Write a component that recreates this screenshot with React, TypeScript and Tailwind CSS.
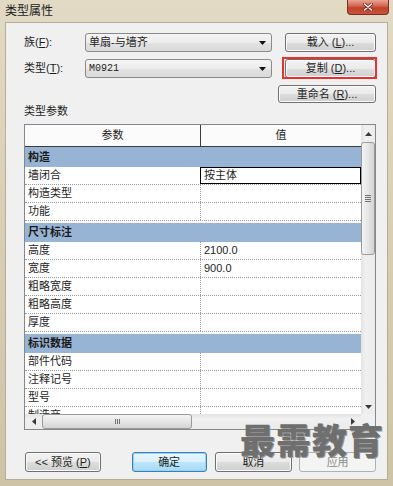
import type { ReactNode } from "react";

type Row =
  | { kind: "group"; label: string }
  | { kind: "param"; label: string; value?: string; selected?: boolean };

const rows: Row[] = [
  { kind: "group", label: "构造" },
  { kind: "param", label: "墙闭合", value: "按主体", selected: true },
  { kind: "param", label: "构造类型" },
  { kind: "param", label: "功能" },
  { kind: "group", label: "尺寸标注" },
  { kind: "param", label: "高度", value: "2100.0" },
  { kind: "param", label: "宽度", value: "900.0" },
  { kind: "param", label: "粗略宽度" },
  { kind: "param", label: "粗略高度" },
  { kind: "param", label: "厚度" },
  { kind: "group", label: "标识数据" },
  { kind: "param", label: "部件代码" },
  { kind: "param", label: "注释记号" },
  { kind: "param", label: "型号" },
  { kind: "param", label: "制造商" },
];

// underlined mnemonic letter, like (&F) in a Windows dialog
function Mn({ children }: { children: ReactNode }) {
  return <span className="underline underline-offset-1">{children}</span>;
}

function WinButton({
  children,
  className = "",
}: {
  children: ReactNode;
  className?: string;
}) {
  return (
    <div
      className={`flex items-center justify-center rounded-[3px] border border-[#707070] bg-[linear-gradient(#f2f2f2_0%,#ebebeb_50%,#dddddd_51%,#cfcfcf_100%)] shadow-[inset_0_0_0_1px_#fbfbfb] ${className}`}
    >
      {children}
    </div>
  );
}

function Combo({ children }: { children: ReactNode }) {
  return (
    <div className="flex h-[19px] w-[187px] items-center rounded-[3px] border border-[#8a8a8a] bg-[linear-gradient(#f4f4f4_0%,#ececec_50%,#e2e2e2_51%,#dadada_100%)] pl-[3px] pr-[5px]">
      {children}
      <svg className="ml-auto" width="7" height="4" viewBox="0 0 7 4">
        <path d="M0 0h7L3.5 4z" fill="#111" />
      </svg>
    </div>
  );
}

function Arrow({ dir }: { dir: "up" | "down" | "left" | "right" }) {
  const d = {
    up: "M0 4h7L3.5 0z",
    down: "M0 0h7L3.5 4z",
    left: "M4 0v7L0 3.5z",
    right: "M0 0v7L4 3.5z",
  }[dir];
  const vertical = dir === "up" || dir === "down";
  return (
    <svg width={vertical ? 7 : 4} height={vertical ? 4 : 7} viewBox={vertical ? "0 0 7 4" : "0 0 4 7"}>
      <path d={d} fill="#3a3a3a" />
    </svg>
  );
}

function VScroll() {
  return (
    <div className="flex w-[14px] flex-col bg-[linear-gradient(90deg,#e3e3e3,#f0f0f0_30%,#ececec)]">
      <div className="flex h-[17px] items-center justify-center">
        <Arrow dir="up" />
      </div>
      <div className="flex h-[113px] flex-col items-center justify-center gap-[1px] rounded-[3px] border border-[#9a9a9a] bg-[linear-gradient(90deg,#f4f4f4,#e6e6e6_50%,#d4d4d4)]">
        <div className="h-px w-[6px] bg-[#707070]" />
        <div className="h-px w-[6px] bg-[#707070]" />
        <div className="h-px w-[6px] bg-[#707070]" />
        <div className="h-px w-[6px] bg-[#707070]" />
      </div>
      <div className="flex-1" />
      <div className="flex h-[15px] items-center justify-center">
        <Arrow dir="down" />
      </div>
    </div>
  );
}

function HScroll() {
  return (
    <div className="flex h-[15px] flex-1 items-stretch bg-[linear-gradient(#e3e3e3,#f0f0f0_30%,#ececec)]">
      <div className="flex w-[17px] items-center justify-center">
        <Arrow dir="left" />
      </div>
      <div className="flex w-[150px] items-center justify-center gap-[1px] rounded-[3px] border border-[#9a9a9a] bg-[linear-gradient(#f4f4f4,#e6e6e6_50%,#d4d4d4)]">
        <div className="h-[5px] w-px bg-[#707070]" />
        <div className="h-[5px] w-px bg-[#707070]" />
        <div className="h-[5px] w-px bg-[#707070]" />
      </div>
      <div className="flex-1" />
      <div className="flex w-[17px] items-center justify-center">
        <Arrow dir="right" />
      </div>
    </div>
  );
}

function ParamTable() {
  return (
    <div className="flex h-[306px] w-[352px] flex-col border border-[#828790] bg-white">
      <div className="flex flex-1 overflow-hidden">
        <div className="flex w-[336px] flex-col">
          <div className="flex h-[22px] border-b border-[#3c3c3c] bg-[#fbfbfb]">
            <div className="flex w-[176px] items-center justify-center border-r border-[#3c3c3c]">参数</div>
            <div className="flex flex-1 items-center justify-center">值</div>
          </div>
          <div className="flex-1 overflow-hidden">
            {rows.map((r, i) =>
              r.kind === "group" ? (
                <div
                  key={r.label}
                  className={`flex items-center bg-[#98b4d4] pl-[3px] font-bold text-[#1a1a1a] ${
                    i === 0 ? "h-[20px]" : "h-[21px] border-t-2 border-white"
                  }`}
                >
                  {r.label}
                </div>
              ) : (
                <div key={r.label} className="flex h-[18px] border-b border-dotted border-[#9a9a9a]">
                  <div className="flex w-[175px] items-center pl-[3px]">{r.label}</div>
                  <div
                    className={`flex flex-1 items-center pl-[3px] ${
                      r.selected ? "border border-black" : "border-l border-dotted border-[#9a9a9a]"
                    }`}
                  >
                    {r.value}
                  </div>
                </div>
              )
            )}
          </div>
        </div>
        <VScroll />
      </div>
      <div className="flex">
        <HScroll />
        <div className="h-[15px] w-[14px] bg-[#f0f0f0]" />
      </div>
    </div>
  );
}

export default function App() {
  return (
    <div className="relative flex h-[486px] w-[393px] flex-col overflow-hidden bg-[linear-gradient(180deg,#e2dac4,#d6cbb1_60%,#cfc3a7)] px-[5px] pb-[6px] font-['Liberation_Sans','Noto_Sans_CJK_SC',sans-serif] text-[11px] text-[#1e1e1e]">
      {/* title bar */}
      <div className="flex h-[22px] items-start">
        <div className="pt-[4px] text-[12px] leading-[14px] text-[#222]">类型属性</div>
        <div className="-mr-[1px] ml-auto flex h-[15px] w-[42px] items-center justify-center rounded-b-[4px] border border-t-0 border-[#7a2f20] bg-[linear-gradient(#e9a594,#d0624a_45%,#c2412a_55%,#c9553c)]">
          <svg width="10" height="8" viewBox="0 0 10 8">
            <path d="M1.5 1l7 6M8.5 1l-7 6" stroke="#6b2216" strokeWidth="3" strokeLinecap="round" />
            <path d="M1.5 1l7 6M8.5 1l-7 6" stroke="#fff" strokeWidth="1.6" strokeLinecap="round" />
          </svg>
        </div>
      </div>

      {/* client area */}
      <div className="flex flex-1 flex-col border border-[#b6ad96] bg-[#f0f0f0] pl-[18px] pr-[11px] pt-[10px]">
        <div className="flex">
          <div className="flex flex-col gap-[7px]">
            <div className="flex items-center">
              <div className="w-[61px]">
                族(<Mn>F</Mn>):
              </div>
              <Combo>单扇-与墙齐</Combo>
            </div>
            <div className="flex items-center">
              <div className="w-[61px]">
                类型(<Mn>T</Mn>):
              </div>
              <Combo>
                <span className="font-['Liberation_Mono',monospace] text-[10px]">M0921</span>
              </Combo>
            </div>
          </div>
          <div className="ml-auto flex flex-col items-end gap-[7px]">
            <WinButton className="h-[19px] w-[91px]">
              载入 (<Mn>L</Mn>)...
            </WinButton>
            <div className="relative">
              <WinButton className="h-[19px] w-[91px]">
                复制 (<Mn>D</Mn>)...
              </WinButton>
              <div className="absolute -bottom-[1px] -left-[3px] -right-[1px] -top-[2px] border-2 border-[#e8302c]" />
            </div>
            <WinButton className="h-[18px] w-[98px]">
              重命名 (<Mn>R</Mn>)...
            </WinButton>
          </div>
        </div>

        <div className="flex h-[17px] items-center">类型参数</div>
        <div className="mt-[4px]">
          <ParamTable />
        </div>

        <div className="mt-[22px] flex">
          <WinButton className="ml-[1px] h-[20px] w-[76px]">
            &lt;&lt; 预览 (<Mn>P</Mn>)
          </WinButton>
          <div className="ml-[31px] flex h-[20px] w-[75px] items-center justify-center rounded-[3px] border border-[#3c7fb1] bg-[linear-gradient(#eaf6fd_0%,#d9f0fc_50%,#bee6fd_51%,#a7d9f5_100%)] shadow-[inset_0_0_0_1px_#8fd3f5]">
            确定
          </div>
          <WinButton className="ml-[8px] h-[20px] w-[78px]">取消</WinButton>
          <div className="ml-[7px] flex h-[20px] w-[77px] items-center justify-center rounded-[3px] border border-[#adb2b5] bg-[#f4f4f4] text-[#8a8a8a]">
            应用
          </div>
        </div>
      </div>

      {/* watermark */}
      <div className="absolute left-[240px] top-[424px] text-[35px] font-black leading-none tracking-[1px] text-[#6f6f6f] [text-shadow:1px_1px_0_#9a9a9a]">
        最需教育
      </div>
    </div>
  );
}
